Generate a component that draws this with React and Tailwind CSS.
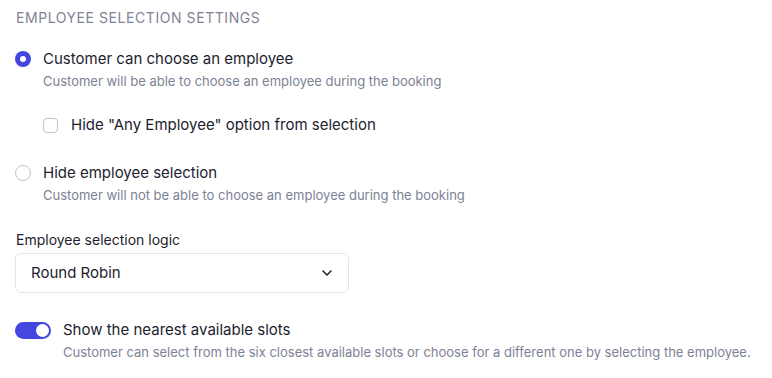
import { ChevronDown } from 'lucide-react';

const Radio = ({ checked }) => (
  <span
    className={
      checked
        ? 'w-4 h-4 rounded-full bg-[#4346e0] flex items-center justify-center shrink-0'
        : 'block w-4 h-4 rounded-full border border-[#bfc3cc] bg-white shrink-0'
    }
  >
    {checked && <span className="w-[6px] h-[6px] rounded-full bg-white" />}
  </span>
);

export default function App() {
  return (
    <div className="w-[772px] h-[378px] bg-white font-['Inter',sans-serif] text-[#1c1d2e] pl-[15px] pt-[10px]">
      <h2 className="text-[14px] leading-4 tracking-[0.04em] uppercase text-[#7f8494] pl-[1px]">
        Employee selection settings
      </h2>

      {/* Option 1 */}
      <div className="mt-[22px] flex gap-3">
        <div className="pt-[3px]">
          <Radio checked />
        </div>
        <div>
          <p className="text-[15px] leading-[22px]">Customer can choose an employee</p>
          <p className="text-[13px] leading-5 text-[#7c8294] mt-[1px]">
            Customer will be able to choose an employee during the booking
          </p>
        </div>
      </div>

      <label className="mt-[23px] ml-[28px] flex items-center gap-[13px]">
        <span className="w-[15px] h-[15px] rounded-[4px] border border-[#bfc3cc] bg-white" />
        <span className="text-[15px] leading-[22px]">Hide "Any Employee" option from selection</span>
      </label>

      {/* Option 2 */}
      <div className="mt-[26px] flex gap-3">
        <div className="pt-[3px]">
          <Radio />
        </div>
        <div>
          <p className="text-[15px] leading-[22px]">Hide employee selection</p>
          <p className="text-[13px] leading-5 text-[#7c8294] mt-[1px]">
            Customer will not be able to choose an employee during the booking
          </p>
        </div>
      </div>

      {/* Selection logic */}
      <div className="mt-[25px]">
        <p className="text-[14px] leading-5 pl-[1px]">Employee selection logic</p>
        <div className="mt-[3px] w-[334px] h-[40px] border border-[#e3e5ea] rounded-[6px] flex items-center justify-between pl-[15px] pr-[13px]">
          <span className="text-[15px]">Round Robin</span>
          <ChevronDown className="w-4 h-4 text-[#1c1d2e]" strokeWidth={2.25} />
        </div>
      </div>

      {/* Toggle */}
      <div className="mt-[26px] flex gap-3">
        <div className="pt-[3px]">
          <span className="w-[36px] h-[17px] rounded-full bg-[#4346e0] flex items-center justify-end pr-[2px]">
            <span className="w-[13px] h-[13px] rounded-full bg-white" />
          </span>
        </div>
        <div>
          <p className="text-[15px] leading-[22px]">Show the nearest available slots</p>
          <p className="text-[13px] leading-5 text-[#7c8294] mt-[1px]">
            Customer can select from the six closest available slots or choose for a different one by selecting the employee.
          </p>
        </div>
      </div>
    </div>
  );
}
